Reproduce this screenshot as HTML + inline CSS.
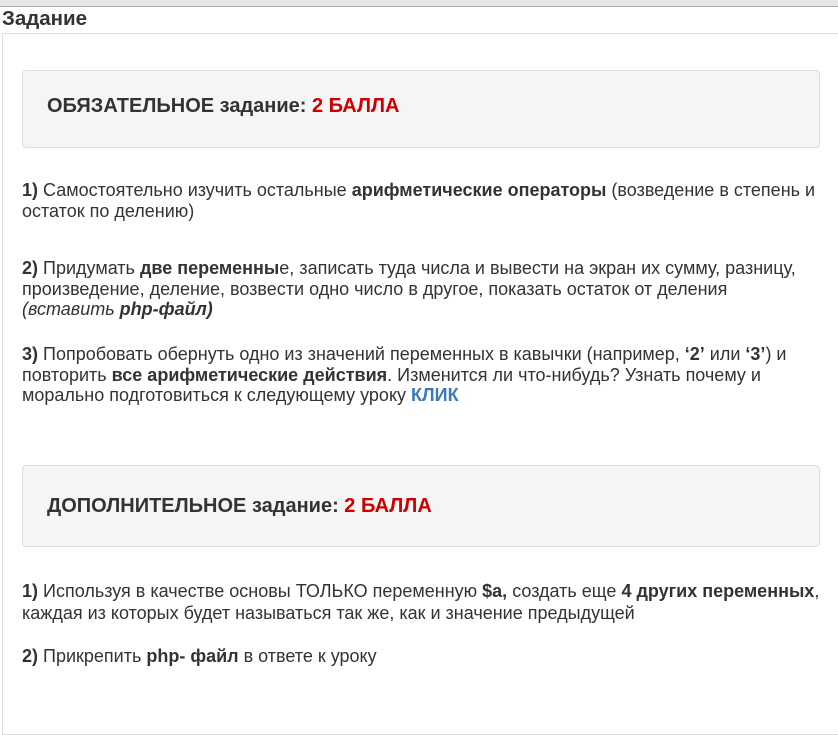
<!DOCTYPE html>
<html><head><meta charset="utf-8"><style>
body{margin:0;width:838px;height:728px;overflow:hidden;background:#fff;font-family:"Liberation Sans",Arial,sans-serif;color:#333;position:relative}
.top{position:absolute;left:0;top:0;width:838px;height:6px;background:#e6e6e6;border-bottom:1px solid #aaa}
.title{position:absolute;left:2px;top:7px;font-size:20.5px;font-weight:bold;color:#333}
.panel{position:absolute;left:2px;top:33px;width:840px;height:700px;border:1px solid #ddd;border-right:none}
.box{position:absolute;left:22px;width:796px;background:#f5f5f5;border:1px solid #ddd;border-radius:4px;font-size:20px;font-weight:bold;color:#333}
.box span{color:#c00}
.box div{position:absolute;left:24px}
.t{position:absolute;left:22px;font-size:18px;line-height:20.5px;white-space:nowrap}
a{color:#3a7ab8;font-weight:bold;text-decoration:none}
</style></head><body>
<div class="top"></div>
<div class="title">Задание</div>
<div class="panel"></div>
<div class="box" style="top:70px;height:76px"><div style="top:24px">ОБЯЗАТЕЛЬНОЕ задание: <span>2 БАЛЛА</span></div></div>
<div class="t" style="top:180px;line-height:21px"><b>1)</b> Самостоятельно изучить остальные <b>арифметические операторы</b> (возведение в степень и<br>остаток по делению)</div>
<div class="t" style="top:258px"><b>2)</b> Придумать <b>две переменны</b>е, записать туда числа и вывести на экран их сумму, разницу,<br>произведение, деление, возвести одно число в другое, показать остаток от деления<br><i>(вставить <b>php-файл)</b></i></div>
<div class="t" style="top:344px"><b>3)</b> Попробовать обернуть одно из значений переменных в кавычки (например, <b>‘2’</b> или <b>‘3’</b>) и<br>повторить <b>все арифметические действия</b>. Изменится ли что-нибудь? Узнать почему и<br>морально подготовиться к следующему уроку <a>КЛИК</a></div>
<div class="box" style="top:465px;height:80px"><div style="top:29px">ДОПОЛНИТЕЛЬНОЕ задание: <span>2 БАЛЛА</span></div></div>
<div class="t" style="top:580px;line-height:22px"><b>1)</b> Используя в качестве основы ТОЛЬКО переменную <b>$a,</b> создать еще <b>4 других переменных</b>,<br>каждая из которых будет называться так же, как и значение предыдущей</div>
<div class="t" style="top:646px"><b>2)</b> Прикрепить <b>php- файл</b> в ответе к уроку</div>
</body></html>
